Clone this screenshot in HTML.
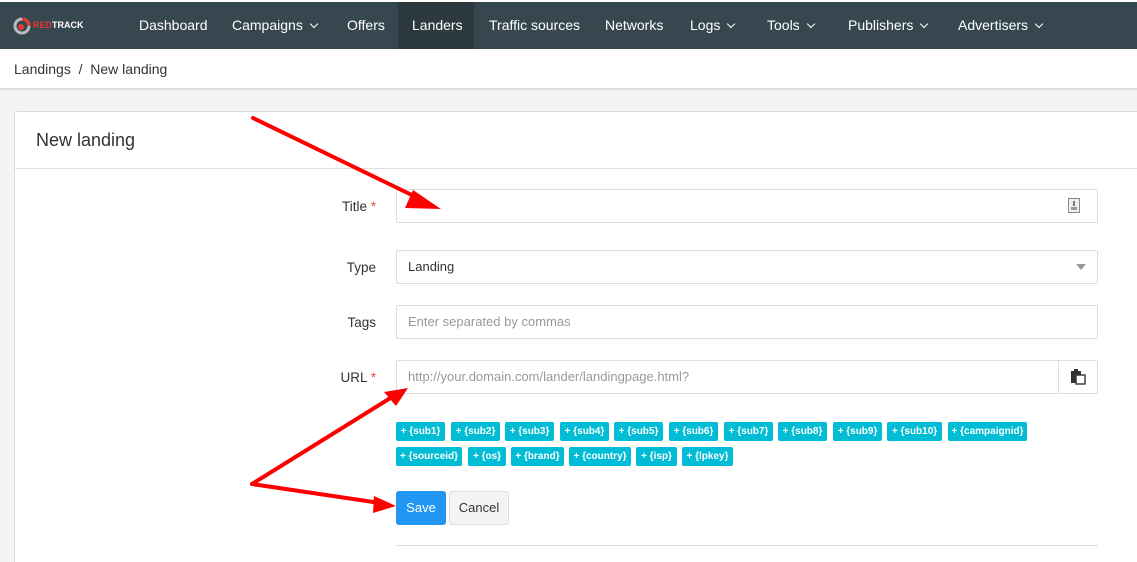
<!DOCTYPE html>
<html><head><meta charset="utf-8"><style>
*{margin:0;padding:0;box-sizing:border-box}
html,body{width:1137px;height:562px;overflow:hidden}
body{background:#f4f4f4;font-family:"Liberation Sans",Arial,sans-serif;position:relative}
.top{position:absolute;left:0;top:0;width:1137px;height:2px;background:#fff}
.nav{position:absolute;left:0;top:2px;width:1137px;height:47px;background:#37474f}
.nav span{position:absolute;top:0;line-height:47px;color:#fff;font-size:14px}
.act{position:absolute;left:398px;top:0;width:76px;height:47px;background:#2c393f}
.chev{display:inline-block;width:6px;height:6px;border-right:1.5px solid #fff;border-bottom:1.5px solid #fff;transform:rotate(45deg);margin-left:8px;position:relative;top:-3px}
.bc{position:absolute;left:0;top:49px;width:1137px;height:41px;background:#fff;border-bottom:2px solid #ddd;font-size:14px;color:#333;line-height:41px;padding-left:14px}
.card{position:absolute;left:14px;top:111px;width:1123px;height:451px;background:#fff;border-left:1px solid #ddd;border-top:1px solid #ddd;border-radius:3px 0 0 0}
.hd{height:57px;border-bottom:1px solid #ddd;font-size:18px;color:#333;line-height:57px;padding-left:21px}
.lbl{position:absolute;font-size:13.5px;color:#333;text-align:right;width:100px;left:276px}
.lbl i{color:#e74c3c;font-style:normal}
.inp{position:absolute;left:396px;width:702px;height:34px;border:1px solid #ddd;border-radius:2px;font-size:13px;line-height:32px;padding-left:11px;color:#333}
.ph{color:#999}
.tg{position:absolute;height:19px;background:#00bcd4;color:#fff;font-size:10px;line-height:19px;text-align:center;border-radius:2px;font-weight:bold}
.save{position:absolute;left:396px;top:491px;width:50px;height:34px;background:#2196f3;color:#fff;font-size:13px;line-height:34px;text-align:center;border-radius:3px}
.cancel{position:absolute;left:449px;top:491px;width:60px;height:34px;background:#f4f4f4;border:1px solid #ddd;color:#333;font-size:13px;line-height:32px;text-align:center;border-radius:3px}
</style></head><body>
<div class="top"></div>
<div class="nav">
<div class="act"></div>
<svg style="position:absolute;left:13px;top:15px" width="18" height="18" viewBox="0 0 18 18"><circle cx="9" cy="9" r="7" fill="none" stroke="#bbb" stroke-width="3"/><path d="M9 2A7 7 0 0 1 16 9" fill="none" stroke="#e53935" stroke-width="3"/><circle cx="8" cy="10" r="3" fill="#e53935"/></svg>
<span style="left:33px;font-size:9px;font-weight:bold;top:0;line-height:46px"><b style="color:#e53935">RED</b>TRACK</span>
<span style="left:139px">Dashboard</span>
<span style="left:232px">Campaigns<i class="chev"></i></span>
<span style="left:347px">Offers</span>
<span style="left:412px">Landers</span>
<span style="left:489px">Traffic sources</span>
<span style="left:605px">Networks</span>
<span style="left:690px">Logs<i class="chev"></i></span>
<span style="left:767px">Tools<i class="chev"></i></span>
<span style="left:848px">Publishers<i class="chev"></i></span>
<span style="left:958px">Advertisers<i class="chev"></i></span>
</div>
<div class="bc">Landings&nbsp; /&nbsp; New landing</div>
<div class="card"><div class="hd">New landing</div></div>
<div class="lbl" style="top:199px">Title <i>*</i></div>
<div class="inp" style="top:189px"></div>
<svg style="position:absolute;left:1068px;top:198px" width="12" height="15"><rect x="0.5" y="0.5" width="11" height="14" fill="#eee" stroke="#888"/><rect x="5" y="3" width="2" height="5" fill="#777"/><rect x="3" y="9" width="6" height="3" fill="#999"/></svg>
<div class="lbl" style="top:260px">Type</div>
<div class="inp" style="top:250px">Landing</div>
<div style="position:absolute;left:1076px;top:264px;border-left:5px solid transparent;border-right:5px solid transparent;border-top:6px solid #999"></div>
<div class="lbl" style="top:315px">Tags</div>
<div class="inp ph" style="top:305px">Enter separated by commas</div>
<div class="lbl" style="top:370px">URL <i>*</i></div>
<div class="inp ph" style="top:360px">http://your.domain.com/lander/landingpage.html?</div>
<div style="position:absolute;left:1058px;top:361px;width:1px;height:32px;background:#ddd"></div>
<svg style="position:absolute;left:1071px;top:369px" width="15" height="16"><rect x="0" y="2" width="10" height="12" fill="#333"/><rect x="3" y="0" width="4" height="3" fill="#333"/><rect x="5" y="6" width="9" height="9" fill="#fff" stroke="#333" stroke-width="1.4"/></svg>
<div class="tg" style="left:396px;top:422px;width:49px">+ {sub1}</div>
<div class="tg" style="left:451px;top:422px;width:49px">+ {sub2}</div>
<div class="tg" style="left:505px;top:422px;width:49px">+ {sub3}</div>
<div class="tg" style="left:560px;top:422px;width:49px">+ {sub4}</div>
<div class="tg" style="left:614px;top:422px;width:49px">+ {sub5}</div>
<div class="tg" style="left:669px;top:422px;width:49px">+ {sub6}</div>
<div class="tg" style="left:724px;top:422px;width:49px">+ {sub7}</div>
<div class="tg" style="left:778px;top:422px;width:49px">+ {sub8}</div>
<div class="tg" style="left:833px;top:422px;width:49px">+ {sub9}</div>
<div class="tg" style="left:887px;top:422px;width:55px">+ {sub10}</div>
<div class="tg" style="left:948px;top:422px;width:79px">+ {campaignid}</div>
<div class="tg" style="left:396px;top:447px;width:66px">+ {sourceid}</div>
<div class="tg" style="left:468px;top:447px;width:38px">+ {os}</div>
<div class="tg" style="left:511px;top:447px;width:53px">+ {brand}</div>
<div class="tg" style="left:569px;top:447px;width:62px">+ {country}</div>
<div class="tg" style="left:636px;top:447px;width:41px">+ {isp}</div>
<div class="tg" style="left:682px;top:447px;width:51px">+ {lpkey}</div>
<div class="save">Save</div>
<div class="cancel">Cancel</div>
<div style="position:absolute;left:396px;top:545px;width:702px;height:1px;background:#ddd"></div>
<svg style="position:absolute;left:0;top:0" width="1137" height="562">
<g stroke="#f00" stroke-width="4" fill="none" stroke-linecap="round" stroke-linejoin="round">
<path d="M253 118L420 199"/><path d="M252 484L392 397M252 484L380 503"/></g>
<g fill="#f00"><path d="M441 209L413 190L405 208Z"/><path d="M408 388L384 392L396 406Z"/><path d="M396 506L374 496L373 513Z"/></g>
</svg>
</body></html>
